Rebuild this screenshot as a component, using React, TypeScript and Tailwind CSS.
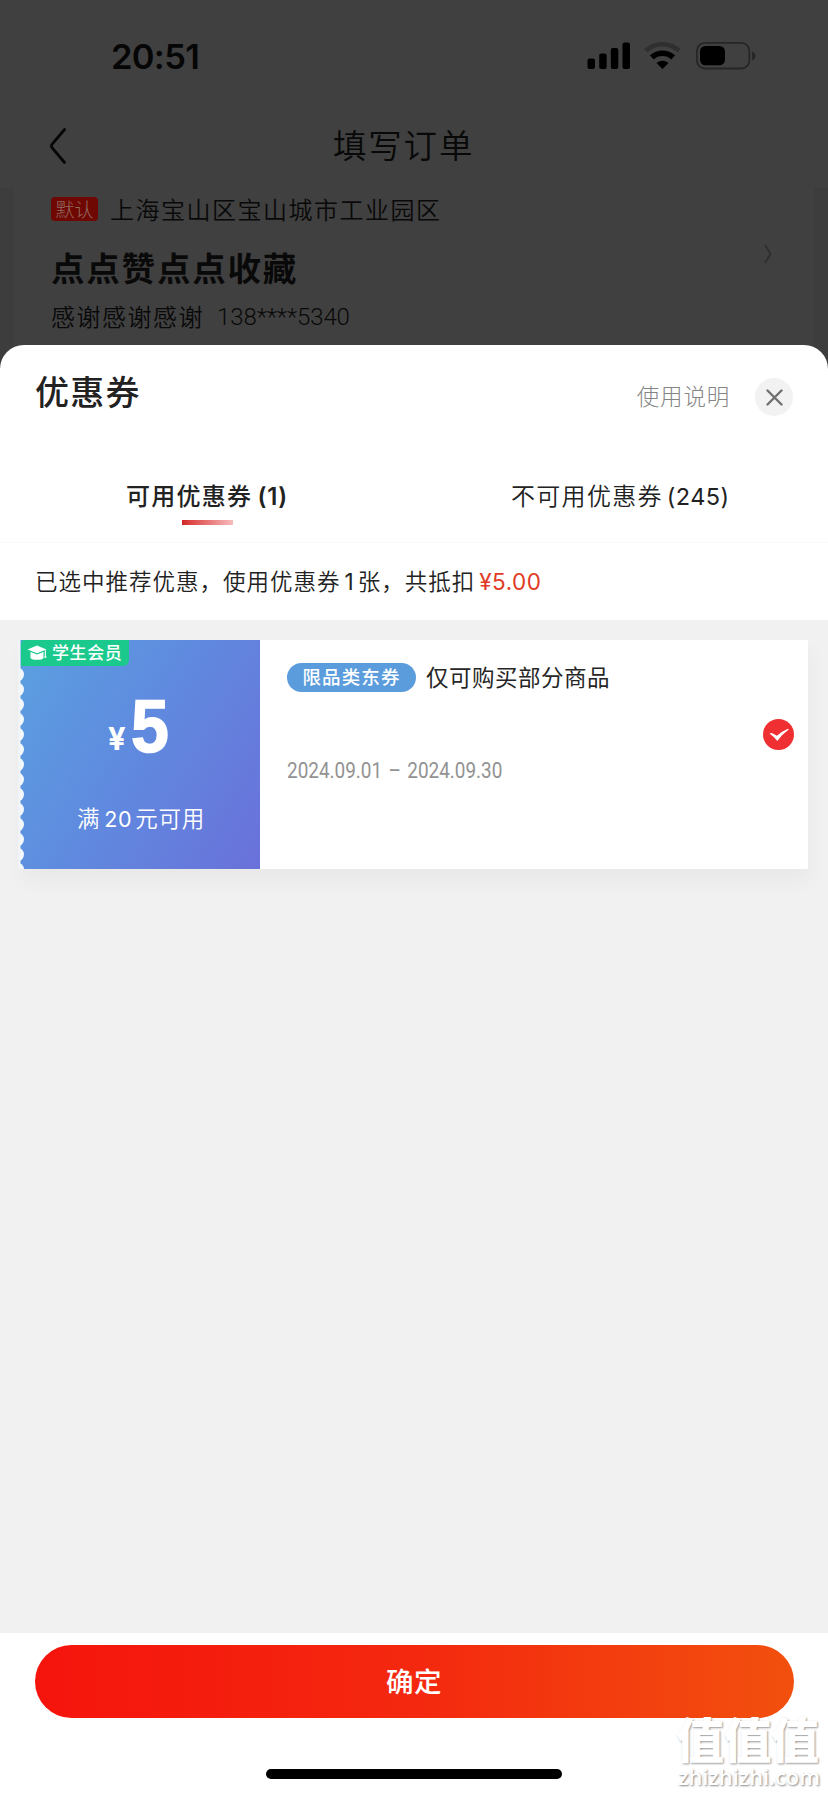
import { clsx } from "clsx";

const cjk = "font-['Noto_Sans_CJK_SC',sans-serif]";
const latin = "font-['Inter','Noto_Sans_CJK_SC',sans-serif]";

function StatusIcons() {
  return (
    <svg width="172" height="32" viewBox="0 0 172 32" fill="#000">
      {/* Signal */}
      <rect x="3.5" y="18.5" width="7.5" height="10.5" rx="2" />
      <rect x="15.2" y="13.5" width="7.5" height="15.5" rx="2" />
      <rect x="26.8" y="8" width="7.5" height="21" rx="2" />
      <rect x="38.5" y="2.5" width="7.5" height="26.5" rx="2" />
      {/* Wifi */}
      <g fill="none">
        <path d="M61.8 10.8a24.5 24.5 0 0 1 33.4 0" stroke="#2f2f2f" strokeWidth="4.6" />
        <path d="M67.8 17.4a16 16 0 0 1 21.4 0" stroke="#000" strokeWidth="5.6" />
      </g>
      <path d="M78.5 29l-6-6q6-4.6 12 0z" />
      {/* Battery */}
      <rect x="112.9" y="2.9" width="52.5" height="25.6" rx="8" fill="none" stroke="#262626" strokeWidth="1.8" />
      <rect x="116" y="6" width="25" height="19.3" rx="5.5" />
      <path d="M168 11.5q3.5 1.2 3.5 4.4t-3.5 4.4z" fill="#262626" />
    </svg>
  );
}

function OrderPage() {
  return (
    <div className="h-[345px] bg-[#3d3d3d]">
      <div className="h-[188px] bg-[#404040]">
        <div className="flex h-[96px] items-start justify-between pl-[111px] pr-[72px] pt-10">
          <span className={clsx(latin, "-mt-px text-[34.5px] font-semibold leading-[36px] tracking-[-0.7px] text-[#060606]")}>
            20:51
          </span>
          <StatusIcons />
        </div>
        <div className="flex h-[92px] items-start pl-[49px] pt-[31px]">
          <svg width="18" height="38" viewBox="0 0 18 38" fill="none" className="mr-[266px]">
            <path
              d="M15.5 2.5L3.2 17Q1.7 19 3.2 21L15.5 35.5"
              stroke="#060606"
              strokeWidth="2.8"
              strokeLinecap="round"
            />
          </svg>
          <h1 className="-mt-0.5 text-[33.5px] font-[350] leading-[38px] tracking-[1.8px] text-[#080808]">
            填写订单
          </h1>
        </div>
      </div>
      <div className="mx-3.5 flex h-[157px] justify-between bg-[#404040] pl-[37px] pr-[41px] text-[#090909]">
        <div>
          <div className="flex h-[42px] items-center">
            <span className="flex h-6 w-[47px] items-center justify-center rounded bg-[#6f0803] text-[19px] font-light text-[#926a60]">
              默认
            </span>
            <span className="ml-3 text-[24px] font-[350] leading-8 tracking-[1.5px]">
              上海宝山区宝山城市工业园区
            </span>
          </div>
          <div className="mt-4 text-[33.5px] font-bold leading-[42px] tracking-[1.8px]">
            点点赞点点收藏
          </div>
          <div className="mt-3 flex text-[24px] font-[350] leading-8 tracking-[1.5px]">
            <span>感谢感谢感谢</span>
            <span className="ml-[13px] font-['Roboto'] leading-[35px] tracking-[-0.1px]">
              138****5340
            </span>
          </div>
        </div>
        <svg width="10" height="22" viewBox="0 0 10 22" fill="none" className="mt-[55px]">
          <path d="M2 2L7.5 11 2 20" stroke="#303030" strokeWidth="2" strokeLinejoin="round" />
        </svg>
      </div>
    </div>
  );
}

function CouponCard() {
  const notches = Array.from({ length: 14 }, (_, i) => 34 + i * 15);

  return (
    <div className="mx-5 flex h-[229px] bg-white shadow-[2px_12px_20px_rgba(0,0,0,0.04)]">
      <div className="relative w-60 bg-[linear-gradient(120deg,#5ba0e0_0%,#5f8bdf_45%,#6a71da_100%)] text-white">
        <svg width="8" height="229" viewBox="0 0 8 229" className="absolute -left-0.5 top-0">
          {notches.map((y) => (
            <circle key={y} cx="-1" cy={y + 0.5} r="7" fill="#f3f8fc" />
          ))}
          <rect width="2.5" height="229" fill="#f1f4f6" />
        </svg>
        <div className="absolute left-px top-0 flex h-[26px] w-[108px] items-center rounded-br-md rounded-tl bg-[#1cc98d] pl-1.5">
          <svg width="20" height="16" viewBox="0 0 20 16" fill="#fff">
            <path d="M10 0.5L0.5 4.5 10 8.2 19.5 4.5z" />
            <path d="M3.5 7v5.5q0 2.3 6.500 2.3t6.500-2.3V7L10 9.6z" />
            <path d="M17.8 5.2h1.1v5.6l.8 2h-2.6l.7-2z" />
          </svg>
          <span className="-mt-[3px] ml-[5px] text-[17px] font-medium leading-6 tracking-[0.6px]">学生会员</span>
        </div>
        <div className="flex h-[121px] items-end pl-[88px] font-['Inter']">
          <span className="text-[31px] font-bold leading-[44px]">¥</span>
          <span className="ml-[5px] origin-left scale-x-[0.92] font-['Liberation_Sans'] text-[74px] font-bold leading-[69px] [-webkit-text-stroke:1.5px_#fff]">
            5
          </span>
        </div>
        <div className="mt-10 pl-[57px] text-[22.5px] font-[350] leading-8 tracking-[0.7px]">
          满<span className="ml-1 mr-[3px] font-['Inter'] text-[21.5px] font-normal">20</span>元可用
        </div>
      </div>
      <div className="flex flex-1 items-start justify-between pl-[27px] pr-3.5">
        <div>
          <div className="mt-[23px] flex h-[29px] items-center">
            <span className="flex h-[29px] w-[129px] items-center justify-center rounded-full bg-[#5b9cdc] pb-px text-[18.5px] font-medium tracking-[1.1px] text-white">
              限品类东券
            </span>
            <span className="-mt-[3px] ml-2.5 text-[22.5px] leading-8 tracking-[0.5px] text-[#262626]">
              仅可购买部分商品
            </span>
          </div>
          <div className="mt-[63px] w-max origin-left scale-x-[0.86] font-['Roboto'] text-[22px] leading-8 text-[#929292]">
            2024.09.01 <span className="mx-0.5">–</span> 2024.09.30
          </div>
        </div>
        <svg width="31" height="31" viewBox="0 0 31 31" className="mt-[79px]">
          <circle cx="15.5" cy="15.5" r="15.5" fill="#ef2f31" />
          <path d="M6.5 14.5l2.3-.6 5.2 2.8q5-4.5 11-6.9l.8.8Q19 15.5 14.3 22q-3-4-7.8-7.5z" fill="#fff" />
        </svg>
      </div>
    </div>
  );
}

function CouponSheet() {
  return (
    <div className="h-[1450px] bg-[#3d3d3d]">
      <div className="flex h-[1450px] flex-col rounded-t-[24px] bg-white">
        <div className="flex h-[103px] items-start justify-between px-[35px]">
          <h2 className="mt-[25px] text-[34px] font-medium leading-[42px] tracking-[1.2px] text-[#222]">
            优惠券
          </h2>
          <div className="mt-[33px] flex items-center">
            <span className="-mt-1 text-[22.5px] font-light leading-[38px] tracking-[0.8px] text-[#858585]">
              使用说明
            </span>
            <button className="ml-[25px] flex size-[38px] items-center justify-center rounded-full bg-[#f2f2f2]">
              <svg width="17" height="17" viewBox="0 0 17 17" fill="none">
                <path d="M1.5 1.5l14 14M15.5 1.5l-14 14" stroke="#707070" strokeWidth="2.4" strokeLinecap="round" />
              </svg>
            </button>
          </div>
        </div>

        {/* Tabs */}
        <div className="flex h-[95px] border-b border-[#fafafa] text-[24px] leading-8 tracking-[1.3px] text-[#222]">
          <div className="flex w-[414px] flex-col items-center pt-[31px]">
            <div className="font-medium">
              可用优惠券
              <span className="ml-[5px] font-['Inter'] font-semibold tracking-[0.8px]">(1)</span>
            </div>
            <div className="mt-[7px] h-[5px] w-[51px] bg-[linear-gradient(90deg,#cf2626_0%,#dc4040_14%,#f8bcbc_100%)]" />
          </div>
          <div className="w-[414px] pl-[97px] pt-[31px] font-[350]">
            不可用优惠券
            <span className="ml-1 font-['Inter'] text-[23.5px] font-normal tracking-[0.4px]">(245)</span>
          </div>
        </div>

        <div className="h-[77px] pl-[35px] pt-[21px] text-[22.5px] font-[350] leading-8 tracking-[1px] text-[#222]">
          已选中推荐优惠，使用优惠券
          <span className="ml-1 mr-[3px] font-['Inter'] font-normal">1</span>
          张，共抵扣
          <span className="ml-1 font-['Inter'] font-normal tracking-[0.5px] text-[#e13a26]">¥5.00</span>
        </div>

        <div className="flex-1 bg-[#f1f1f1] pt-5">
          <CouponCard />
        </div>

        <div className="flex h-[162px] flex-col items-center pt-3">
          <button className="h-[73px] w-[759px] rounded-full bg-[linear-gradient(90deg,#f5140c_0%,#f4280f_50%,#f2500e_100%)] pb-0.5 text-[27.5px] font-medium tracking-[0.6px] text-white">
            确定
          </button>
          <div className="mt-[51px] h-2.5 w-[296px] rounded-full bg-black" />
        </div>
      </div>
    </div>
  );
}

function Watermark() {
  return (
    <div className="absolute left-[676px] top-[1711px] text-white">
      <div className="text-[48px] font-black leading-[52px] tracking-[-0.5px] [text-shadow:1px_1px_2px_#999]">
        值值值
      </div>
      <div className="ml-0.5 font-['Open_Sans'] text-[21.8px] font-semibold leading-[28px] [text-shadow:1px_1px_2px_#888]">
        zhizhizhi.com
      </div>
    </div>
  );
}

export default function App() {
  return (
    <div className={clsx(cjk, "relative h-[1795px] w-[828px] overflow-hidden bg-white")}>
      <OrderPage />
      <CouponSheet />
      <Watermark />
    </div>
  );
}
